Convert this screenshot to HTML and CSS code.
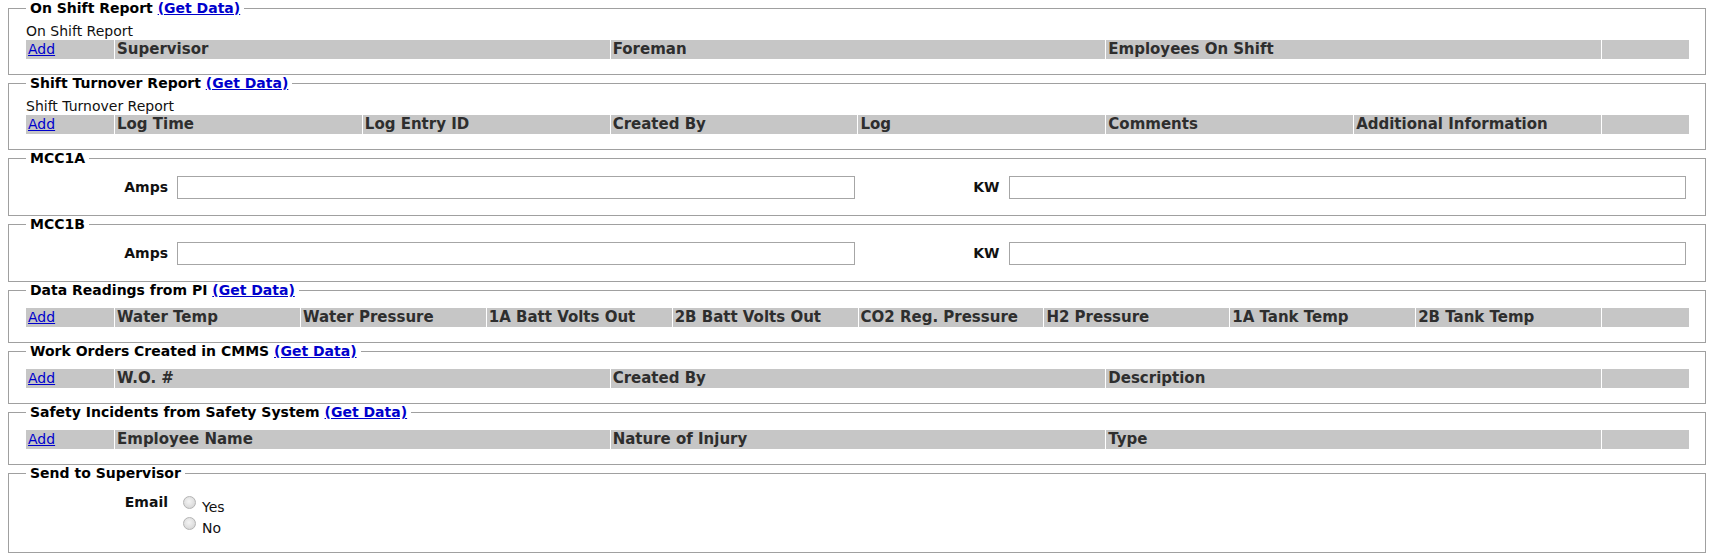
FILE: index.html
```html
<!DOCTYPE html>
<html>
<head>
<meta charset="utf-8">
<title>Shift Report</title>
<link rel="stylesheet" href="styles.css">
</head>
<body>
<form class="page">

  <fieldset class="panel">
    <legend class="panel-title">On Shift Report <a class="get-data" href="#">(Get Data)</a></legend>
    <div class="grid-caption">On Shift Report</div>
    <table class="grid">
      <colgroup><col class="col-edge"><col><col><col><col class="col-edge"></colgroup>
      <tr><th><a class="add" href="#">Add</a></th><th>Supervisor</th><th>Foreman</th><th>Employees On Shift</th><th></th></tr>
    </table>
  </fieldset>

  <fieldset class="panel">
    <legend class="panel-title">Shift Turnover Report <a class="get-data" href="#">(Get Data)</a></legend>
    <div class="grid-caption">Shift Turnover Report</div>
    <table class="grid">
      <colgroup><col class="col-edge"><col><col><col><col><col><col><col class="col-edge"></colgroup>
      <tr><th><a class="add" href="#">Add</a></th><th>Log Time</th><th>Log Entry ID</th><th>Created By</th><th>Log</th><th>Comments</th><th>Additional Information</th><th></th></tr>
    </table>
  </fieldset>

  <fieldset class="panel">
    <legend class="panel-title">MCC1A</legend>
    <div class="field-row">
      <div class="field"><label class="field-label">Amps</label><input class="field-input" type="text"></div>
      <div class="field"><label class="field-label">KW</label><input class="field-input" type="text"></div>
    </div>
  </fieldset>

  <fieldset class="panel">
    <legend class="panel-title">MCC1B</legend>
    <div class="field-row">
      <div class="field"><label class="field-label">Amps</label><input class="field-input" type="text"></div>
      <div class="field"><label class="field-label">KW</label><input class="field-input" type="text"></div>
    </div>
  </fieldset>

  <fieldset class="panel">
    <legend class="panel-title">Data Readings from PI <a class="get-data" href="#">(Get Data)</a></legend>
    <table class="grid">
      <colgroup><col class="col-edge"><col><col><col><col><col><col><col><col><col class="col-edge"></colgroup>
      <tr><th><a class="add" href="#">Add</a></th><th>Water Temp</th><th>Water Pressure</th><th>1A Batt Volts Out</th><th>2B Batt Volts Out</th><th>CO2 Reg. Pressure</th><th>H2 Pressure</th><th>1A Tank Temp</th><th>2B Tank Temp</th><th></th></tr>
    </table>
  </fieldset>

  <fieldset class="panel">
    <legend class="panel-title">Work Orders Created in CMMS <a class="get-data" href="#">(Get Data)</a></legend>
    <table class="grid">
      <colgroup><col class="col-edge"><col><col><col><col class="col-edge"></colgroup>
      <tr><th><a class="add" href="#">Add</a></th><th>W.O. #</th><th>Created By</th><th>Description</th><th></th></tr>
    </table>
  </fieldset>

  <fieldset class="panel">
    <legend class="panel-title">Safety Incidents from Safety System <a class="get-data" href="#">(Get Data)</a></legend>
    <table class="grid">
      <colgroup><col class="col-edge"><col><col><col><col class="col-edge"></colgroup>
      <tr><th><a class="add" href="#">Add</a></th><th>Employee Name</th><th>Nature of Injury</th><th>Type</th><th></th></tr>
    </table>
  </fieldset>

  <fieldset class="panel panel--last">
    <legend class="panel-title">Send to Supervisor</legend>
    <div class="field field--top">
      <span class="field-label field-label--top">Email</span>
      <div class="radio-list">
        <label class="radio-row"><input class="radio" type="radio" name="email">Yes</label>
        <label class="radio-row"><input class="radio" type="radio" name="email">No</label>
      </div>
    </div>
  </fieldset>

</form>
</body>
</html>
```

FILE: styles.css
```css
html, body {
  background: #ffffff;
}

body {
  margin: 0 8px;
  font-family: "DejaVu Sans", Verdana, sans-serif;
  font-size: 14px;
  line-height: 17px;
  color: #000;
}

.page {
  margin: 0;
}

.panel {
  margin: 0;
  border: 1px solid #a0a0a0;
  padding: 9px 16px 15px 17px;
  min-width: 0;
}

.panel--last {
  padding-bottom: 14px;
}

.panel-title {
  padding: 0 4px;
  font-weight: bold;
  line-height: 17px;
  color: #000;
}

.get-data {
  color: #0000cc;
  text-decoration: underline;
}

.grid-caption {
  margin-top: -3px;
  line-height: 17px;
  color: #111;
}

.grid {
  width: 100%;
  table-layout: fixed;
  border-collapse: separate;
  border-spacing: 0;
}

.col-edge {
  width: 88px;
}

.grid th {
  background: #c6c6c6;
  color: #2e2e2e;
  font-size: 15px;
  font-weight: bold;
  text-align: left;
  padding: 1px 2px;
  line-height: 17px;
  white-space: nowrap;
  overflow: hidden;
}

.grid th + th {
  border-left: 1px solid #ffffff;
}

.add {
  font-size: 14px;
  font-weight: normal;
  color: #0000cc;
  text-decoration: underline;
}

.field-row {
  display: flex;
  height: 24px;
}

.field {
  flex: 1;
  display: flex;
  align-items: flex-start;
}

.field-label {
  flex: 0 0 151px;
  box-sizing: border-box;
  padding-right: 9px;
  text-align: right;
  font-weight: bold;
  color: #111;
  line-height: 17px;
  margin-top: 3px;
}

.field-input {
  flex: 1;
  min-width: 0;
  box-sizing: border-box;
  height: 23px;
  margin: 0 3px 0 0;
  border: 1px solid #a6a6a6;
  background: #fff;
  padding: 0 3px;
  font: inherit;
}

.field--top {
  align-items: flex-start;
}

.field-label--top {
  margin-top: 3px;
}

.radio-list {
  display: flex;
  flex-direction: column;
  padding-top: 5px;
}

.radio-row {
  display: block;
  line-height: 20px;
  color: #111;
}

.radio {
  -webkit-appearance: none;
  appearance: none;
  box-sizing: border-box;
  width: 13px;
  height: 13px;
  margin: 0 6px 3px 6px;
  border: 1px solid #b4b4b4;
  border-radius: 50%;
  background: radial-gradient(circle at 45% 40%, #f4f4f4 0%, #e0e0e0 55%, #cdcdcd 100%);
  vertical-align: baseline;
}
```
